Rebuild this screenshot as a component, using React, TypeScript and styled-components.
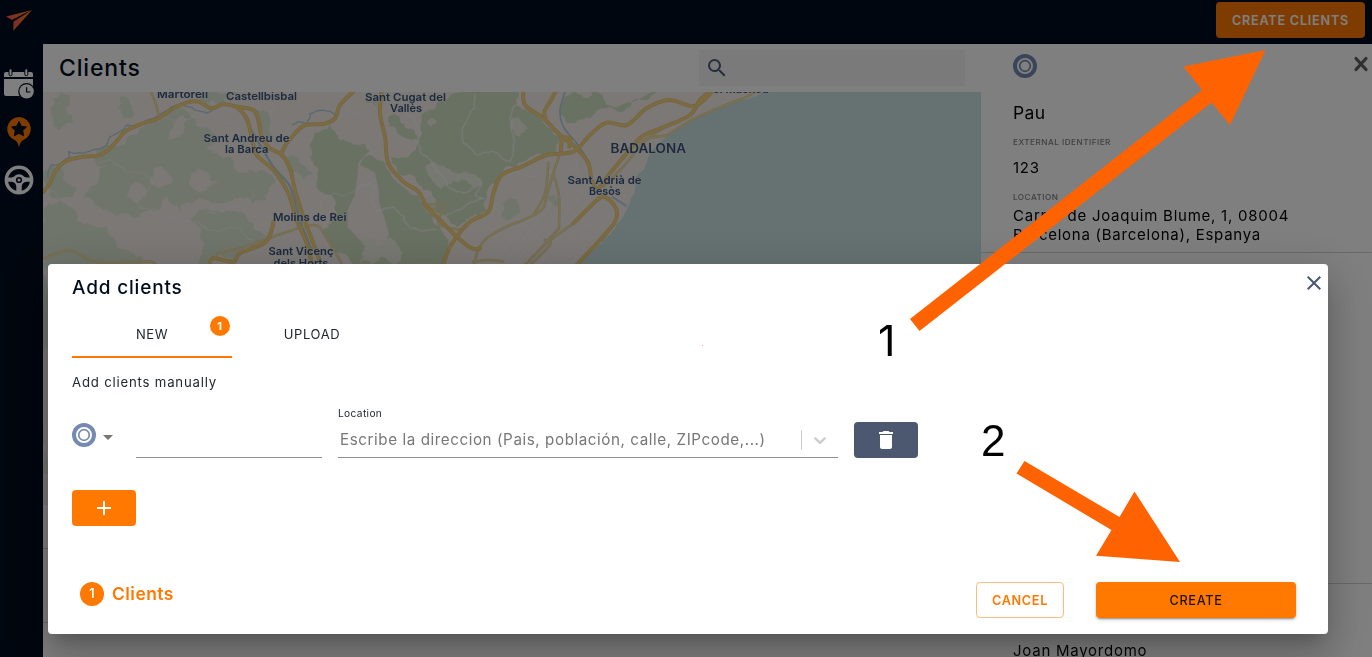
import React from "react";
import styled, { createGlobalStyle } from "styled-components";

const Global = createGlobalStyle`
  * { box-sizing: border-box; }
  body { margin: 0; overflow: hidden; font-family: Inter, "Liberation Sans", sans-serif; }
  button { font-family: inherit; cursor: pointer; padding: 0; }
`;

const ORANGE = "#ff7800";
const SLATE = "#4b5870";

/* ---------- application shell ---------- */

const Page = styled.div`
  position: relative;
  width: 1372px;
  height: 657px;
  overflow: hidden;
  display: flex;
  flex-direction: column;
  background: #fff;
`;

const TopBar = styled.header`
  height: 44px;
  flex: none;
  display: flex;
  justify-content: space-between;
  align-items: flex-start;
  padding: 2px 7px 0 5px;
  background: #000c1e;
`;

const LogoWrap = styled.div`
  padding-top: 7px;
  line-height: 0;
`;

const CreateClients = styled.button`
  width: 149px;
  height: 36px;
  border: 0;
  border-radius: 4px;
  background: ${ORANGE};
  color: #fff;
  font-size: 12.7px;
  font-weight: 600;
  letter-spacing: 0.75px;
  white-space: nowrap;
`;

const Body = styled.div`
  flex: 1;
  min-height: 0;
  display: flex;
`;

const Sidebar = styled.nav`
  width: 43px;
  flex: none;
  background: #000c1e;
  display: flex;
  flex-direction: column;
  align-items: flex-start;
  gap: 16px;
  padding: 24px 0 0 3px;
  svg { display: block; }
`;

const Main = styled.main`
  width: 938px;
  flex: none;
  display: flex;
  flex-direction: column;
`;

const MainHeader = styled.div`
  height: 48px;
  flex: none;
  display: flex;
  justify-content: space-between;
  align-items: center;
  padding: 0 16px;
`;

const PageTitle = styled.h1`
  margin: 0;
  font-size: 23px;
  font-weight: 550;
  line-height: 30px;
  letter-spacing: 0.85px;
  color: #000c1e;
`;

const SearchBox = styled.div`
  width: 266px;
  height: 36px;
  padding: 6px;
  background: #f4f4f4;
`;

const MapSvg = styled.svg`
  display: block;
  flex: none;
  width: 938px;
  height: 413px;
`;

const TableRow = styled.div<{ $h: number }>`
  height: ${(p) => p.$h}px;
  flex: none;
  border-bottom: 1px solid #d8d8d8;
`;

const Panel = styled.aside`
  flex: 1;
  display: flex;
  flex-direction: column;
  color: #000;
`;

const ClientCard = styled.section<{ $h: number }>`
  height: ${(p) => p.$h}px;
  flex: none;
  padding: 10px 3px 0 32px;
  border-bottom: 1px solid #d4d4d4;
`;

const CardHead = styled.div`
  height: 48px;
  display: flex;
  justify-content: space-between;
  svg { display: block; }
`;

const ClientName = styled.div`
  font-size: 17.5px;
  line-height: 22px;
  letter-spacing: 0.4px;
`;

const FieldLabel = styled.div<{ $top: number }>`
  margin-top: ${(p) => p.$top}px;
  font-size: 8.2px;
  line-height: 12px;
  font-weight: 500;
  letter-spacing: 0.47px;
  color: #808080;
`;

const FieldValue = styled.div<{ $top: number }>`
  margin-top: ${(p) => p.$top}px;
  font-size: 15px;
  line-height: 19px;
  letter-spacing: 0.75px;
  white-space: nowrap;
`;

const NextName = styled(FieldValue)`
  padding-left: 32px;
`;

const Backdrop = styled.div`
  position: absolute;
  inset: 0;
  background: rgba(0, 0, 0, 0.5);
`;

/* ---------- dialog ---------- */

const Dialog = styled.section`
  position: absolute;
  left: 48px;
  top: 264px;
  width: 1280px;
  height: 370px;
  border-radius: 4px;
  background: #fff;
  display: flex;
  flex-direction: column;
  padding: 0 24px;
  color: #23272f;
  box-shadow: 0 11px 15px -7px rgba(0, 0, 0, 0.2), 0 24px 38px 3px rgba(0, 0, 0, 0.14),
    0 9px 46px 8px rgba(0, 0, 0, 0.12);
`;

const DialogHead = styled.div`
  height: 48px;
  display: flex;
  justify-content: space-between;
  margin-right: -22px;
  padding: 7px 0 0;
`;

const DialogTitle = styled.h2`
  margin: 5px 0 0;
  font-size: 19px;
  line-height: 24px;
  font-weight: 550;
  letter-spacing: 0.83px;
  color: #000c1e;
`;

const Tabs = styled.div`
  display: flex;
  height: 46px;
`;

const Tab = styled.div<{ $active?: boolean }>`
  position: relative;
  width: 160px;
  display: flex;
  justify-content: center;
  border-bottom: 2px solid ${(p) => (p.$active ? ORANGE : "transparent")};
  font-size: 13px;
  line-height: 45px;
  letter-spacing: 0.6px;
`;

const TabBadge = styled.span`
  position: absolute;
  right: 2px;
  top: 4px;
  width: 20px;
  height: 20px;
  border-radius: 50%;
  background: ${ORANGE};
  color: #fff;
  font-size: 11px;
  font-weight: 700;
  line-height: 20px;
  text-align: center;
`;

const Hint = styled.div`
  margin-top: 15px;
  font-size: 13.2px;
  line-height: 18px;
  letter-spacing: 0.8px;
`;

const FormRow = styled.div`
  margin-top: 13px;
  height: 54px;
  display: flex;
  align-items: flex-end;
`;

const TypePicker = styled.div`
  width: 64px;
  height: 35px;
  display: flex;
  align-items: flex-start;
  gap: 7px;
  svg { display: block; }
`;

const CaretWrap = styled.div`
  padding-top: 12px;
`;

const NameField = styled.div`
  width: 186px;
  height: 36px;
  border-bottom: 1px solid #8d8f93;
`;

const LocationField = styled.div`
  width: 500px;
  margin: 0 16px;
`;

const LocationLabel = styled.div`
  font-size: 10.2px;
  line-height: 14px;
  letter-spacing: 0.35px;
`;

const SelectBox = styled.div`
  display: flex;
  align-items: center;
  height: 38px;
  padding: 2px 8px 0 2px;
  border-bottom: 1px solid #8d8f93;
`;

const Placeholder = styled.span`
  flex: 1;
  font-size: 15.2px;
  letter-spacing: 0.57px;
  color: #777;
  white-space: nowrap;
`;

const Divider = styled.span`
  width: 1px;
  height: 20px;
  margin-right: 8px;
  background: #ccc;
`;

const IconButton = styled.button<{ $bg: string }>`
  width: 64px;
  height: 36px;
  border: 0;
  border-radius: 4px;
  background: ${(p) => p.$bg};
  display: flex;
  align-items: center;
  justify-content: center;
`;

const AddWrap = styled.div`
  margin-top: 32px;
`;

const Footer = styled.footer`
  margin-top: auto;
  margin-bottom: 16px;
  height: 36px;
  display: flex;
  padding: 0 8px;
`;

const Count = styled.span`
  width: 24px;
  height: 24px;
  border-radius: 50%;
  background: ${ORANGE};
  color: #fff;
  font-size: 12.5px;
  font-weight: 600;
  line-height: 24px;
  text-align: center;
`;

const CountLabel = styled.span`
  flex: 1;
  margin-left: 8px;
  color: ${ORANGE};
  font-size: 17.4px;
  font-weight: 600;
  line-height: 24px;
  letter-spacing: 0.5px;
`;

const Cancel = styled.button`
  width: 88px;
  height: 36px;
  margin-right: 32px;
  border: 1px solid #ffbb7f;
  border-radius: 4px;
  background: #fff;
  color: ${ORANGE};
  font-size: 12.7px;
  font-weight: 600;
  letter-spacing: 0.65px;
`;

const Create = styled.button`
  width: 200px;
  height: 36px;
  border: 0;
  border-radius: 4px;
  background: ${ORANGE};
  color: #1f1208;
  font-size: 12.7px;
  font-weight: 550;
  letter-spacing: 0.7px;
  box-shadow: 0 3px 1px -2px rgba(0, 0, 0, 0.2), 0 2px 2px 0 rgba(0, 0, 0, 0.14), 0 1px 5px 0 rgba(0, 0, 0, 0.12);
`;

/* ---------- annotations ---------- */

const Arrows = styled.svg`
  position: absolute;
  inset: 0;
  pointer-events: none;
`;

const StepNumber = styled.span<{ $x: number; $y: number; $font: string; $size: number }>`
  position: absolute;
  left: ${(p) => p.$x}px;
  top: ${(p) => p.$y}px;
  font-family: ${(p) => p.$font}, sans-serif;
  font-size: ${(p) => p.$size}px;
  line-height: 50px;
  color: #000;
`;

/* ---------- icons ---------- */

const Logo = () => (
  <svg width="28" height="24" viewBox="5 9 28 24">
    <defs>
      <linearGradient id="plane" x1="0" x2="1" y1="0.3" y2="0">
        <stop offset="0" stopColor="#ff5c48" />
        <stop offset="1" stopColor="#ff8a14" />
      </linearGradient>
    </defs>
    <path d="M6 16.4 32 10 12.2 20Z" fill="url(#plane)" />
    <path d="M32 10 13.2 31 13.6 21.4 18 18.7Z" fill="url(#plane)" />
    <path d="M12.5 20.2 27 12.4" stroke="#000c1e" strokeWidth="0.8" strokeDasharray="4 1" />
  </svg>
);

const CalendarIcon = () => (
  <svg width="32" height="32" viewBox="3 68 32 32">
    <path d="M6 72h25q2 0 2 2v3H4v-3q0-2 2-2Z" fill="#fff" />
    <path d="M4 79h29v17H6q-2 0-2-2Z" fill="#fff" />
    <rect x="9" y="68.8" width="3" height="7" rx="1.5" fill="#fff" stroke="#000c1e" />
    <rect x="24.8" y="68.8" width="3" height="7" rx="1.5" fill="#fff" stroke="#000c1e" />
    <circle cx="26.6" cy="91.4" r="8.4" fill="#000c1e" />
    <circle cx="26.6" cy="91.4" r="7.2" fill="#fff" />
    <path d="M26.6 87.2V92H30.4" fill="none" stroke="#000c1e" strokeWidth="1.2" />
  </svg>
);

const PinIcon = () => (
  <svg width="32" height="32" viewBox="3 116 32 32">
    <path d="M19 117a12 12 0 0 1 3.6 23.4Q20.6 141.3 19 147Q17.4 141.3 15.4 140.4A12 12 0 0 1 19 117Z" fill={ORANGE} />
    <path
      d="m19 121.500 2.300 4.700 5.100.8-3.700 3.600.9 5.100-4.600-2.400-4.600 2.400.9-5.100-3.700-3.600 5.100-.8Z"
      fill="#000c1e"
      stroke="#000c1e"
      strokeLinejoin="round"
    />
  </svg>
);

const WheelIcon = () => (
  <svg width="32" height="32" viewBox="3 164 32 32">
    <circle cx="19" cy="180" r="12.7" fill="none" stroke="#fff" strokeWidth="3.4" />
    <path d="M7.500 177.500h4q2.500-.3 4-2.300 1.500-1 3.500-1t3.500 1q1.500 2 4 2.300h4v4.300h-4q-4.500.7-4.800 4.700v5h-5.400v-5q-.3-4-4.800-4.700h-4Z" fill="#fff" />
    <circle cx="19" cy="180" r="3.1" fill="#000c1e" />
    <circle cx="19" cy="180" r="1.5" fill="#fff" />
  </svg>
);

const Ring = () => (
  <svg width="24" height="24" viewBox="0 0 24 24">
    <circle cx="12" cy="12" r="10" fill="none" stroke="#748ab3" strokeWidth="4" />
    <circle cx="12" cy="12" r="5.3" fill="none" stroke="#748ab3" strokeWidth="1.7" />
  </svg>
);

const SearchIcon = () => (
  <svg width="24" height="24" viewBox="0 0 24 24" fill="#4f5a78">
    <path d="M15.500 14h-.79l-.28-.27A6.471 6.471 0 0 0 16 9.500 6.500 6.500 0 1 0 9.500 16c1.610 0 3.090-.59 4.230-1.570l.27.28v.79l5 4.990L20.490 19l-4.990-5zm-6 0C7.010 14 5 11.990 5 9.500S7.010 5 9.500 5 14 7.010 14 9.500 11.990 14 9.500 14z" />
  </svg>
);

const PanelClose = () => (
  <svg width="16" height="20" viewBox="0 0 16 20">
    <path d="m3 4.500 10 11M13 4.500l-10 11" stroke="#606060" strokeWidth="3.200" strokeLinecap="round" />
  </svg>
);

const DialogClose = () => (
  <svg width="24" height="24" viewBox="0 0 24 24" fill={SLATE}>
    <path d="M19 6.410 17.590 5 12 10.590 6.410 5 5 6.410 10.590 12 5 17.590 6.410 19 12 13.410 17.590 19 19 17.590 13.410 12z" />
  </svg>
);

const Caret = () => (
  <svg width="10" height="5" viewBox="0 0 10 5">
    <path d="M0 0h10L5 5Z" fill="#757575" />
  </svg>
);

const Chevron = () => (
  <svg width="20" height="20" viewBox="0 0 20 20" fill="#ccc">
    <path d="M4.516 7.548c0.436-0.446 1.043-0.481 1.576 0l3.908 3.747 3.908-3.747c0.533-0.481 1.141-0.446 1.574 0 0.436 0.445 0.408 1.197 0 1.615-0.406 0.418-4.695 4.502-4.695 4.502-0.217 0.223-0.502 0.335-0.787 0.335s-0.570-0.112-0.789-0.335c0 0-4.287-4.084-4.695-4.502s-0.436-1.170 0-1.615z" />
  </svg>
);

const Trash = () => (
  <svg width="24" height="24" viewBox="0 0 24 24" fill="#fff">
    <path d="M6 19c0 1.100.9 2 2 2h8c1.100 0 2-.9 2-2V7H6v12zM19 4h-3.500l-1-1h-5l-1 1H5v2h14V4z" />
  </svg>
);

const Plus = () => (
  <svg width="24" height="24" viewBox="0 0 24 24" fill="#fff">
    <path d="M19 13h-6v6h-2v-6H5v-2h6V5h2v6h6v2z" />
  </svg>
);

/* ---------- map ---------- */

type Pt = [number, number];

const parse = (s: string): Pt[] => s.split(" ").map((p) => p.split(",").map(Number) as Pt);

/** Smooth curve through the listed points. */
const curve = (s: string) => {
  const p = parse(s);
  let d = `M${p[0]}`;
  for (let i = 0; i < p.length - 1; i++) {
    const a = p[i - 1] || p[i];
    const b = p[i];
    const c = p[i + 1];
    const e = p[i + 2] || c;
    d += `C${b[0] + (c[0] - a[0]) / 6},${b[1] + (c[1] - a[1]) / 6} ${c[0] - (e[0] - b[0]) / 6},${c[1] - (e[1] - b[1]) / 6} ${c}`;
  }
  return d;
};

/** Irregular natural outline: each segment is split at random offsets. */
const rough = (s: string, closed = true, amp = 0.22, seed = 7) => {
  let pts = parse(s);
  if (closed) pts = [...pts, pts[0]];
  let r = seed;
  const rnd = () => {
    r = (r * 16807) % 2147483647;
    return r / 2147483647 - 0.5;
  };
  for (let k = 0; k < 3; k++) {
    const out: Pt[] = [pts[0]];
    for (let i = 1; i < pts.length; i++) {
      const [x0, y0] = pts[i - 1];
      const [x1, y1] = pts[i];
      const o = rnd() * amp * 2;
      out.push([(x0 + x1) / 2 - (y1 - y0) * o, (y0 + y1) / 2 + (x1 - x0) * o], pts[i]);
    }
    pts = out;
  }
  return "M" + pts.map(([x, y]) => `${x.toFixed(1)},${y.toFixed(1)}`).join("L") + (closed ? "Z" : "");
};

const WEST = "translate(40 40) scale(.33333)";
const EAST = "translate(360 40) scale(.33333)";

const westGreen = [
  "160,352 230,322 290,285 350,242 450,222 500,260 530,300 500,330 560,350 600,400 660,390 705,430 680,480 600,470 540,490 470,480 420,510 380,470 330,510 230,530 190,510 130,470 180,400",
  "10,520 60,480 110,540 200,560 230,620 310,650 300,680 10,680",
  "40,175 90,165 105,250 60,270 40,230",
  "240,170 270,190 285,225 250,235 235,205",
  "15,390 60,385 80,430 110,445 60,480 30,470",
  "450,540 520,515 620,535 690,590 640,620 540,645 500,680 470,680 485,600",
  "430,150 520,150 570,195 620,150 540,200 480,190",
  "640,210 690,235 700,300 670,290",
  "740,350 780,370 820,400 790,420 750,400",
  "10,1300 10,700 30,850 30,1300",
];
const westDark = [
  "815,330 870,255 900,300 940,315 990,330 990,690 940,680 860,600 850,570 900,530 880,470 830,430 820,370",
];
const eastDark = [
  "185,240 200,215 260,180 330,150 480,150 480,200 545,240 600,290 590,325 500,360 430,390 400,430 380,510 330,530 290,560 240,520 190,450 165,410 110,380 88,350 150,345 170,320 175,300",
  "0,375 40,350 90,395 110,430 170,465 200,510 250,580 265,620 245,690 0,690",
  "610,170 680,175 700,150 890,150 820,180 790,215 690,235 640,250 615,240 600,205",
  "90,225 120,245 165,275 175,310 120,285 90,260",
];
const eastLand = [
  "195,380 235,375 290,400 370,420 340,440 280,420 240,450 215,420",
  "200,250 215,235 230,245 215,260",
  "450,230 490,250 520,265 480,290 460,270",
  "180,465 220,490 215,520 190,500",
  "0,590 50,620 90,590 130,640 100,672 60,650 0,672",
];
const westLand = [
  "340,385 380,395 400,420 350,440 330,420",
  "270,440 300,430 320,470 290,490 260,470",
  "450,400 500,395 540,430 500,450 455,440",
  "400,245 440,235 430,270 380,300",
];
const eastGreen = [
  "430,490 470,480 480,510 440,540 425,520",
  "560,470 600,480 585,500",
  "20,170 60,180 50,200 20,190",
];

const westRoads = [
  "10,455 30,430 45,395 75,365 130,350 180,345 220,315 255,275 300,253 355,235 400,205 440,188 475,185 515,205 550,192 590,200 640,210 655,240 665,290 690,325 725,345 750,385 765,450 790,530 820,610 850,690",
  "590,200 620,235 635,290 650,345 700,390 745,460 770,540 800,610 820,690",
  "725,340 740,310 790,258 850,252 885,235 900,195 945,150",
  "507,680 520,655 580,665 600,640 675,608 695,570 700,545",
];
const westMinor = [
  "10,655 90,632 150,660 200,668 330,665 345,680",
  "530,640 600,625 700,590 820,555 860,595 910,680",
  "330,150 345,185 357,230",
];
const eastRoads = [
  "65,150 60,220 75,290 85,370 130,425 175,455 200,500 245,545 290,590 335,625 360,625",
  "248,680 265,630 290,590 330,545 385,515 400,460 425,405 490,378 560,345 640,335 690,285 740,248 800,255 860,205 925,180 990,197 1020,190 1060,150",
  "490,150 495,195 550,235 605,290 650,325 685,370 695,420 715,445 750,400 800,340 845,290 915,260 990,225 1020,180 1055,150",
  "590,150 570,185 553,215 558,240",
  "605,290 603,330",
  "605,292 630,295 628,320",
  "645,680 720,600 765,545 768,505 730,470 690,500 640,550",
];
const eastMinor = [
  "603,330 580,400 560,470 545,510 490,540 440,560 380,595 355,630 340,680",
  "580,400 597,470 597,560",
  "565,370 555,460 520,525",
  "640,550 560,610 490,680",
  "597,565 510,660",
  "555,600 570,615 505,680",
  "340,665 390,660 430,665",
  "195,495 255,495 235,550 300,570",
  "190,493 225,510 245,520",
  "730,440 790,380 860,300 920,285 990,242 1060,210 1150,175 1190,152",
  "800,330 870,290 930,250",
];

const grid: string[] = [];
for (let i = 0; i < 13; i++) {
  grid.push(`M${380 + i * 34},690L${590 + i * 34},430`);
  grid.push(`M${380 + i * 22},${620 - i * 22}l170,150`);
}

const MapLabel = ({ x, y, w, size = 11, children }: { x: number; y: number; w: number; size?: number; children: string }) => (
  <text
    x={x}
    y={y}
    textLength={w}
    lengthAdjust="spacingAndGlyphs"
    fontFamily="Inter, sans-serif"
    fontWeight={600}
    fontSize={size}
    fill="#3a5580"
    stroke="#efeee6"
    strokeOpacity={0.55}
    strokeWidth={1.6}
    paintOrder="stroke"
  >
    {children}
  </text>
);

const Roads = ({ list, minor }: { list: string[]; minor?: boolean }) => (
  <g fill="none" strokeLinecap="round" strokeLinejoin="round">
    {list.map((s, i) => (
      <path key={"c" + i} d={curve(s)} stroke={minor ? "#e6d6a4" : "#e6c983"} strokeWidth={minor ? 8 : 12} />
    ))}
    {list.map((s, i) => (
      <path key={"r" + i} d={curve(s)} stroke={minor ? "#f3e3a8" : "#f8d680"} strokeWidth={minor ? 4 : 8} />
    ))}
  </g>
);

const Shapes = ({ list, fill }: { list: string[]; fill: string }) => (
  <g fill={fill}>
    {list.map((s, i) => (
      <path key={i} d={rough(s, true, 0.26, 11 + i * 97)} />
    ))}
  </g>
);

const CityMap = () => (
  <MapSvg viewBox="43 92 938 413">
    <rect x="43" y="92" width="938" height="413" fill="#f6f1ed" />
    <g transform={WEST}>
      <Shapes list={westGreen} fill="#dfead6" />
      <Shapes list={westDark} fill="#d2e2c4" />
      <Shapes list={westLand} fill="#f6f1ed" />
    </g>
    <g transform={EAST}>
      <Shapes list={eastDark} fill="#d2e2c4" />
      <Shapes list={eastLand} fill="#eff0e4" />
      <Shapes list={eastGreen} fill="#dfead6" />
      <path d={grid.join("")} stroke="#fff" strokeWidth="2.500" opacity="0.600" />
      <path
        d={
          rough(
            "1210,150 1165,178 1110,186 1020,225 960,258 920,290 870,340 850,390 830,410 825,450 800,510 790,530 780,545 760,570 730,600 690,640 672,655 655,680",
            false,
            0.1
          ) + "L655,1500L2000,1500L2000,150Z"
        }
        fill="#cce3e5"
      />
      <path d="M755,470L800,498" stroke="#b4d4e0" strokeWidth="6" />
    </g>
    <g transform={WEST} fill="none" stroke="#fff" strokeWidth="2.500" opacity="0.700">
      <path d={rough("180,365 240,380 290,395 335,415 325,450 290,475 300,505 400,530 470,540 520,570 590,560 640,600", false)} />
      <path d={rough("10,450 60,480 150,440 160,400 200,375", false)} />
      <path d={rough("640,450 600,500 560,510 500,520", false)} />
      <path d={rough("840,500 880,460 940,455 990,430", false)} />
      <path d={rough("350,242 400,240 470,215 540,240 600,270", false)} />
      <path d={rough("710,450 730,520 760,600", false)} />
      <path d={rough("890,155 920,210 990,205", false)} />
      <path d={rough("680,160 690,220 740,260", false)} />
    </g>
    <g transform={EAST} fill="none" stroke="#fff" strokeWidth="3.500" opacity="0.800">
      <path d={rough("345,160 320,240 310,310 350,345 400,335 450,365 460,340 460,200 480,185 480,155", false, 0.14)} />
      <path d={rough("130,210 180,280 180,335 240,400 260,435 310,460 365,425 345,465 375,475 300,510 255,530", false, 0.16)} />
      <path d={rough("0,435 45,440 50,515 100,500 150,565 230,570", false, 0.16)} />
      <path d={rough("430,400 520,410 560,400 660,350", false, 0.1)} opacity="0.600" />
      <path d={rough("640,340 650,420 720,440", false, 0.1)} opacity="0.600" />
      <path d={rough("500,155 560,260 640,250 720,300", false, 0.1)} opacity="0.600" />
    </g>
    <g fill="none" stroke="#b5d3de" strokeWidth="4">
      <g transform={WEST}>
        <path d={rough("25,415 35,375 70,365 90,350 85,335 130,340 200,315 210,290 260,255 350,230 395,200 430,195 500,220 520,205", false, 0.14)} />
        <path d={curve("600,205 640,280 700,380 750,440 780,540 815,630")} strokeWidth="7" />
        <path d={rough("755,253 800,250 810,220 850,210 890,225", false, 0.14)} />
      </g>
      <g transform={EAST}>
        <path d={curve("615,155 600,210 610,260 650,310 690,370")} strokeWidth="5" />
      </g>
    </g>
    <g transform={WEST}>
      <Roads list={westMinor} minor />
      <Roads list={westRoads} />
    </g>
    <g transform={EAST}>
      <Roads list={eastMinor} minor />
      <Roads list={eastRoads} />
    </g>
    <MapLabel x={157} y={98} w={51}>Martorell</MapLabel>
    <MapLabel x={226} y={100} w={71}>Castellbisbal</MapLabel>
    <MapLabel x={203.5} y={142} w={86}>Sant Andreu de</MapLabel>
    <MapLabel x={225} y={153} w={43.5}>la Barca</MapLabel>
    <MapLabel x={273} y={221} w={73.5}>Molins de Rei</MapLabel>
    <MapLabel x={268.5} y={255} w={65}>Sant Vicenç</MapLabel>
    <MapLabel x={273.5} y={266.5} w={55}>dels Horts</MapLabel>
    <MapLabel x={365} y={101} w={81}>Sant Cugat del</MapLabel>
    <MapLabel x={390} y={112} w={32}>Vallès</MapLabel>
    <MapLabel x={610.5} y={153} w={75.5} size={12.5}>BADALONA</MapLabel>
    <MapLabel x={567.5} y={183.5} w={74}>Sant Adrià de</MapLabel>
    <MapLabel x={589} y={195} w={31.5}>Besòs</MapLabel>
    <MapLabel x={713} y={93} w={56}>el Masnou</MapLabel>
  </MapSvg>
);

export default function App() {
  return (
    <>
      <Global />
      <Page>
        <TopBar>
          <LogoWrap>
            <Logo />
          </LogoWrap>
          <CreateClients>CREATE CLIENTS</CreateClients>
        </TopBar>
        <Body>
          <Sidebar>
            <CalendarIcon />
            <PinIcon />
            <WheelIcon />
          </Sidebar>
          <Main>
            <MainHeader>
              <PageTitle>Clients</PageTitle>
              <SearchBox>
                <SearchIcon />
              </SearchBox>
            </MainHeader>
            <CityMap />
            <TableRow $h={44} />
            <TableRow $h={74} />
          </Main>
          <Panel>
            <ClientCard $h={209}>
              <CardHead>
                <Ring />
                <PanelClose />
              </CardHead>
              <ClientName>Pau</ClientName>
              <FieldLabel $top={12}>EXTERNAL IDENTIFIER</FieldLabel>
              <FieldValue $top={10}>123</FieldValue>
              <FieldLabel $top={14}>LOCATION</FieldLabel>
              <FieldValue $top={3}>
                Carrer de Joaquim Blume, 1, 08004
                <br />
                Barcelona (Barcelona), Espanya
              </FieldValue>
            </ClientCard>
            <ClientCard $h={331} />
            <NextName $top={57}>Joan Mayordomo</NextName>
          </Panel>
        </Body>
        <Backdrop />
        <Dialog>
          <DialogHead>
            <DialogTitle>Add clients</DialogTitle>
            <DialogClose />
          </DialogHead>
          <Tabs>
            <Tab $active>
              NEW
              <TabBadge>1</TabBadge>
            </Tab>
            <Tab>UPLOAD</Tab>
          </Tabs>
          <Hint>Add clients manually</Hint>
          <FormRow>
            <TypePicker>
              <Ring />
              <CaretWrap>
                <Caret />
              </CaretWrap>
            </TypePicker>
            <NameField />
            <LocationField>
              <LocationLabel>Location</LocationLabel>
              <SelectBox>
                <Placeholder>Escribe la direccion (Pais, población, calle, ZIPcode,...)</Placeholder>
                <Divider />
                <Chevron />
              </SelectBox>
            </LocationField>
            <IconButton $bg={SLATE}>
              <Trash />
            </IconButton>
          </FormRow>
          <AddWrap>
            <IconButton $bg={ORANGE}>
              <Plus />
            </IconButton>
          </AddWrap>
          <Footer>
            <Count>1</Count>
            <CountLabel>Clients</CountLabel>
            <Cancel>CANCEL</Cancel>
            <Create>CREATE</Create>
          </Footer>
        </Dialog>
        <Arrows width="1372" height="657" viewBox="0 0 1372 657" fill="#ff6200">
          <path d="M1265.500 50 1230 125 1211.500 102.500 919.500 331 910 319 1202 90 1183.500 66.500Z" />
          <path d="M1180 562 1096 555.700 1111.500 530 1016.500 473.500 1024.500 461 1119.500 517 1134.500 491.500Z" />
          <rect x="702" y="345" width="1" height="1" fill="#ff9c80" />
        </Arrows>
        <StepNumber $x={878} $y={315} $font="Inter" $size={43}>1</StepNumber>
        <StepNumber $x={981} $y={416} $font="'Liberation Sans'" $size={44}>2</StepNumber>
      </Page>
    </>
  );
}
